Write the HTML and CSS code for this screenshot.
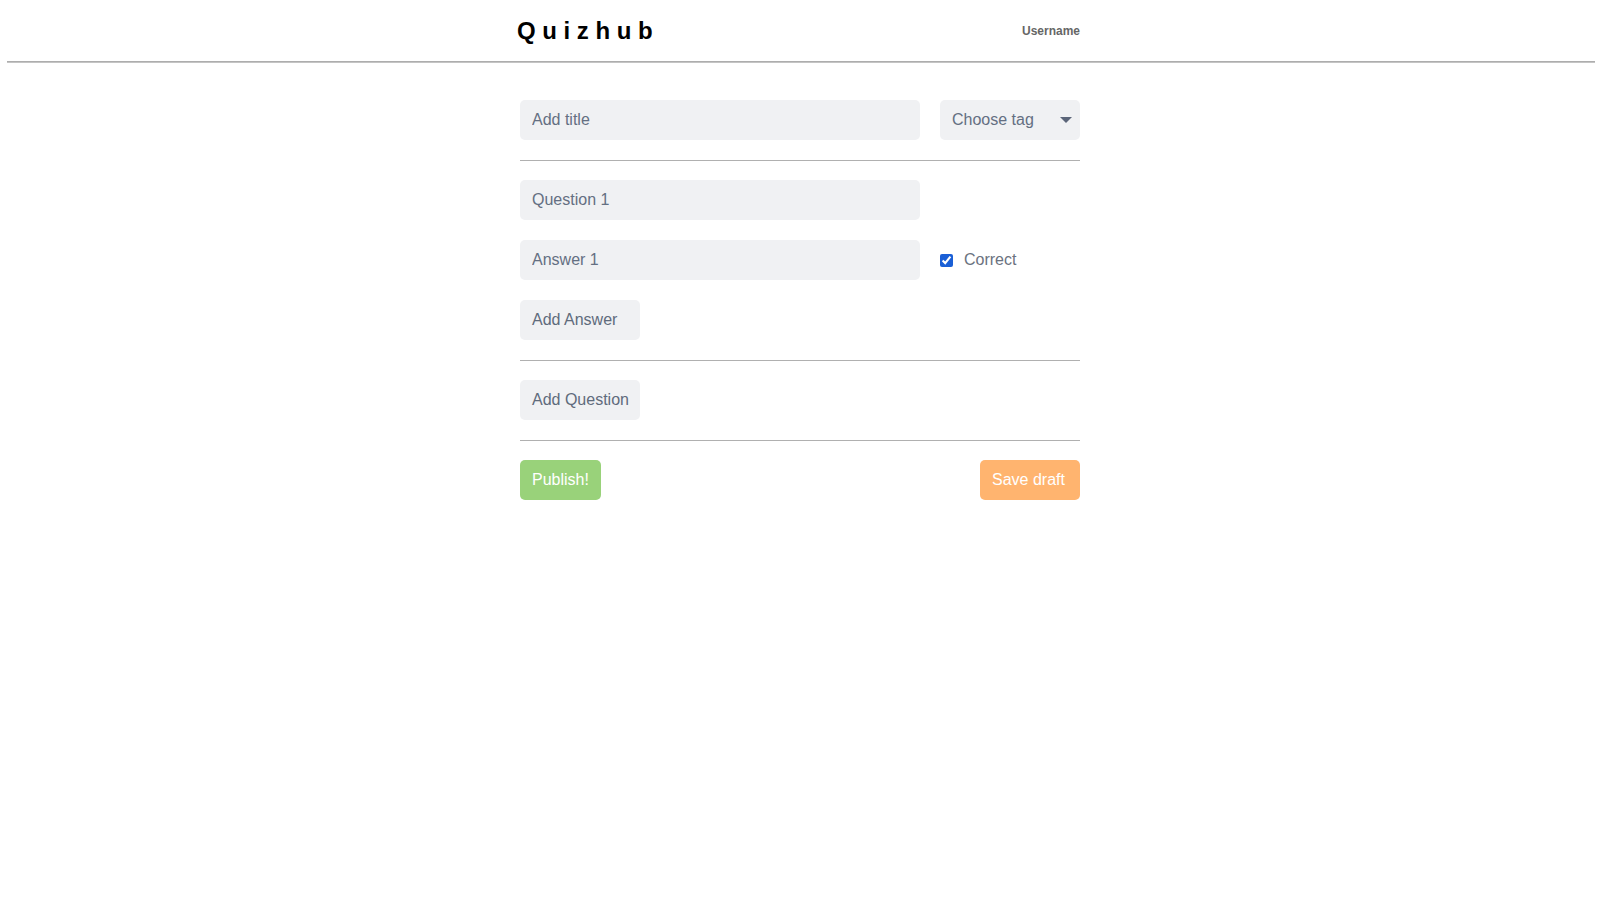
FILE: index.html
```html
<!DOCTYPE html>
<html lang="en">
<head>
<meta charset="utf-8">
<title>Quizhub</title>
<link rel="stylesheet" href="styles.css">
</head>
<body>
<header class="topbar">
  <div class="topbar-inner">
    <div class="logo">Quizhub</div>
    <div class="user">Username</div>
  </div>
</header>
<div class="topbar-line"></div>
<main class="editor">
  <div class="row">
    <input class="field field-wide" type="text" placeholder="Add title">
    <div class="select">
      <span>Choose tag</span>
      <svg class="caret" width="12" height="6" viewBox="0 0 12 6"><path d="M0 0H12L6 6Z" fill="#5b6579"/></svg>
    </div>
  </div>
  <hr class="divider">
  <div class="row">
    <input class="field field-wide" type="text" placeholder="Question 1">
  </div>
  <div class="row">
    <input class="field field-wide" type="text" placeholder="Answer 1">
    <label class="check"><input type="checkbox" checked><span>Correct</span></label>
  </div>
  <div class="row">
    <button class="btn btn-soft">Add Answer</button>
  </div>
  <hr class="divider">
  <div class="row">
    <button class="btn btn-soft">Add Question</button>
  </div>
  <hr class="divider">
  <div class="row row-split">
    <button class="btn btn-green">Publish!</button>
    <button class="btn btn-orange">Save draft</button>
  </div>
</main>
</body>
</html>
```
FILE: styles.css
```css
* { box-sizing: border-box; }
html, body { margin: 0; padding: 0; background: #fff; }
body { font-family: "Liberation Sans", Arial, sans-serif; font-size: 16px; color: #6b7280; }

.topbar { height: 60px; }
.topbar-inner {
  width: 560px;
  height: 60px;
  margin: 0 auto;
  display: flex;
  align-items: center;
  justify-content: space-between;
}
.logo {
  margin-left: -3px;
  margin-top: 1px;
  font-size: 24px;
  font-weight: bold;
  letter-spacing: 6.6px;
  color: #000;
}
.user {
  margin-top: 1px;
  font-size: 12px;
  font-weight: bold;
  color: #666;
}
.topbar-line {
  height: 2px;
  margin: 1px 5px 0 7px;
  background: #b3b3b3;
  border-top: 1px solid #adadad;
  border-bottom: 1px solid #c4c4c4;
}

.editor {
  width: 560px;
  margin: 37px auto 0;
  display: flex;
  flex-direction: column;
  gap: 20px;
}
.row { display: flex; align-items: center; gap: 20px; height: 40px; }
.row-split { justify-content: space-between; }

.field {
  height: 40px;
  border: none;
  border-radius: 5px;
  background: #f0f1f3;
  padding: 0 12px;
  font: inherit;
  color: #4b5563;
  outline: none;
}
.field::placeholder { color: #646f82; opacity: 1; }
.field-wide { width: 400px; }

.select {
  width: 140px;
  height: 40px;
  border-radius: 5px;
  background: #f0f1f3;
  padding: 0 8px 0 12px;
  display: flex;
  align-items: center;
  justify-content: space-between;
  color: #646f82;
}
.caret { display: block; }

.check { display: flex; align-items: center; color: #6b7280; }
.check input {
  width: 13px;
  height: 13px;
  margin: 0 11px 0 0;
  accent-color: #1a5fd6;
}

.divider { border: none; border-top: 1px solid #b0b0b0; margin: 0 0 -1px; height: 0; }

.btn {
  height: 40px;
  border: none;
  border-radius: 5px;
  padding: 0 12px;
  font: inherit;
  cursor: pointer;
  text-align: left;
  white-space: nowrap;
}
.btn-soft { width: 120px; background: #f0f1f3; color: #5f6b7c; }
.btn-green { background: #99d27a; color: #fff; }
.btn-orange { width: 100px; background: #ffb46f; color: #fff; }
```
